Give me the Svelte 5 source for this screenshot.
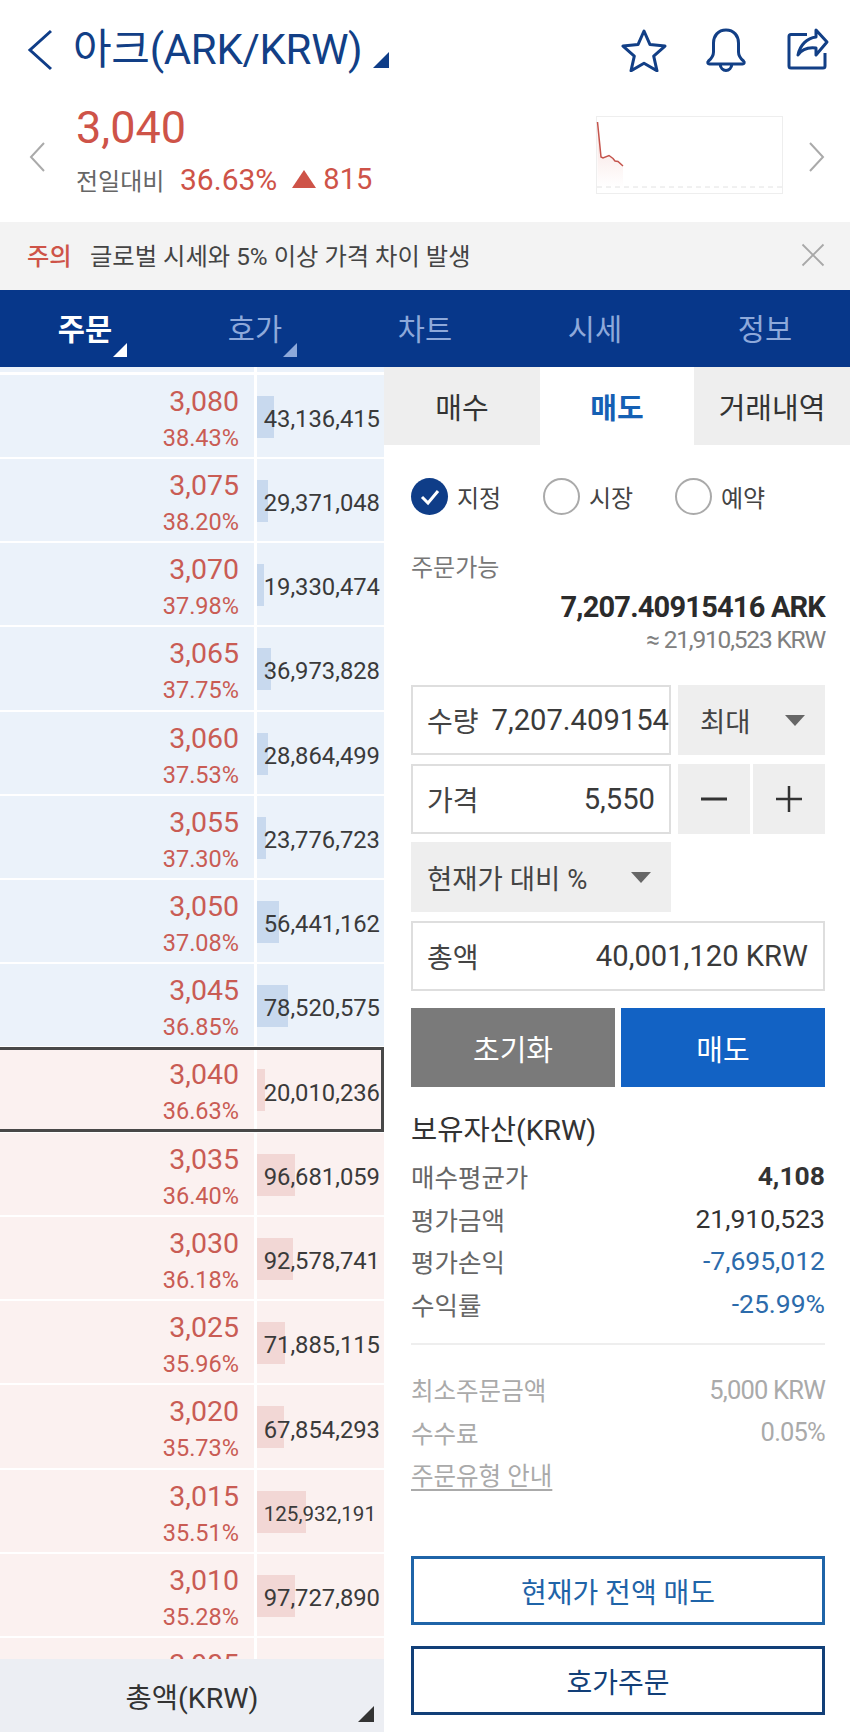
<script>
  const rows = [
    ['3,080','38.43%','43,136,415',43,'b'],['3,075','38.20%','29,371,048',29,'b'],['3,070','37.98%','19,330,474',19,'b'],
    ['3,065','37.75%','36,973,828',37,'b'],['3,060','37.53%','28,864,499',29,'b'],['3,055','37.30%','23,776,723',24,'b'],
    ['3,050','37.08%','56,441,162',56,'b'],['3,045','36.85%','78,520,575',79,'b'],['3,040','36.63%','20,010,236',20,'r'],
    ['3,035','36.40%','96,681,059',97,'r'],['3,030','36.18%','92,578,741',93,'r'],['3,025','35.96%','71,885,115',72,'r'],
    ['3,020','35.73%','67,854,293',68,'r'],['3,015','35.51%','125,932,191',126,'r'],['3,010','35.28%','97,727,890',98,'r'],
    ['3,005','','',0,'r']
  ];
  const tabs = ['주문','호가','차트','시세','정보'];
</script>

<div class="page">
  <header class="head">
    <div class="titlebar">
      <svg class="back" viewBox="0 0 26 42" width="26" height="42"><path d="M24 2 3 21l21 19" fill="none" stroke="#0f3d88" stroke-width="3"/></svg>
      <h1>아크(ARK/KRW)</h1>
      <span class="tri navy"></span>
      <div class="icons">
        <svg viewBox="0 0 46 44" width="46" height="44"><path d="M23 3l6 13.600 15 1.500-11.300 10 3.300 14.700L23 35.200 10 42.800l3.300-14.700L2 18.100l15-1.500z" fill="none" stroke="#123f86" stroke-width="3" stroke-linejoin="round"/></svg>
        <svg viewBox="0 0 42 44" width="42" height="44"><path d="M21 2c-8 0-12.500 6-12.500 13v9c0 4-2 6.500-5 9-1.500 1.500-.5 3 1 3h33c1.500 0 2.500-1.500 1-3-3-2.500-5-5-5-9v-9C33.500 8 29 2 21 2zM15 36c.5 4 3 6.500 6 6.500s5.500-2.500 6-6.500" fill="none" stroke="#123f86" stroke-width="3" stroke-linejoin="round"/></svg>
        <svg viewBox="0 0 44 44" width="44" height="44"><path d="M22 6.500H6a2 2 0 0 0-2 2V38a2 2 0 0 0 2 2h32a2 2 0 0 0 2-2V25" fill="none" stroke="#123f86" stroke-width="3"/><path d="M31 2l11 12-11 13v-7c-8-1-14 1-18 7 2-10 9-17 18-18z" fill="none" stroke="#123f86" stroke-width="3" stroke-linejoin="round"/></svg>
      </div>
    </div>
    <div class="quote">
      <svg class="chev" viewBox="0 0 16 30" width="16" height="30"><path d="M15 1 2 15l13 14" fill="none" stroke="#aaa" stroke-width="2"/></svg>
      <div class="qtext">
        <div class="now">3,040</div>
        <div class="delta"><span class="lbl">전일대비</span><span class="pct">36.63%</span><span class="up"></span><span class="amt">815</span></div>
      </div>
      <svg class="spark" viewBox="0 0 187 78" width="187" height="78">
        <defs><linearGradient id="g" x1="0" y1="0" x2="0" y2="1"><stop offset="0" stop-color="#e9a9a3" stop-opacity=".4"/><stop offset="1" stop-color="#e9a9a3" stop-opacity="0"/></linearGradient></defs>
        <rect x=".5" y=".5" width="186" height="77" fill="#fff" stroke="#eeeeee"/>
        <path d="M1.500 6 5 41l2 1 6-2.500 4 3 2 2.500 3 .5 5 4.500V71H1.500z" fill="url(#g)"/>
        <path d="M1.500 6 5 41l2 1 6-2.500 4 3 2 2.500 3 .5 5 4.500" fill="none" stroke="#c4544c" stroke-width="1.500"/>
        <path d="M1 71h185" stroke="#e2e2e2" stroke-dasharray="5 4"/>
      </svg>
      <svg class="chev" viewBox="0 0 16 30" width="16" height="30"><path d="M1 1l13 14L1 29" fill="none" stroke="#aaa" stroke-width="2"/></svg>
    </div>
  </header>

  <div class="notice">
    <b>주의</b><span>글로벌 시세와 5% 이상 가격 차이 발생</span>
    <svg viewBox="0 0 24 24" width="24" height="24"><path d="M1.500 1.500l21 21M22.500 1.500l-21 21" stroke="#a8a8a8" stroke-width="1.800"/></svg>
  </div>

  <nav class="nav">
    {#each tabs as t, i}
      <div class="nt" class:on={i === 0}>{t}{#if i < 2}<span class="tri small"></span>{/if}</div>
    {/each}
  </nav>

  <main class="main">
    <section class="book">
      <div class="list">
        <div class="stub"><i></i><i></i></div>
        {#each rows as r, i}
          <div class="row {r[4]}" class:cur={r[0] === '3,040'}>
            <div class="pc"><div class="p">{r[0]}</div><div class="q">{r[1]}</div></div>
            <div class="vc">
              <span class="bar" style="width:{r[3] * 0.39}px"></span>
              <span class="v" class:sm={r[2].length > 10}>{r[2]}</span>
            </div>
          </div>
        {/each}
      </div>
      <div class="foot">총액(KRW)<span class="tri dark"></span></div>
    </section>

    <section class="panel">
      <div class="ptabs"><div>매수</div><div class="act">매도</div><div>거래내역</div></div>
      <div class="body">
        <div class="radios">
          <label><span class="rd on"><svg viewBox="0 0 37 37" width="37" height="37"><path d="M11 19l6 6 10-12" fill="none" stroke="#fff" stroke-width="3"/></svg></span>지정</label>
          <label><span class="rd"></span>시장</label>
          <label><span class="rd"></span>예약</label>
        </div>
        <div class="avail">주문가능</div>
        <div class="amount">7,207.40915416 ARK</div>
        <div class="approx">≈ 21,910,523 KRW</div>

        <div class="grid">
          <div class="inp qty"><span class="k">수량</span><span class="val">7,207.409154</span></div>
          <div class="sel side">최대<span class="caret"></span></div>
          <div class="inp"><span class="k">가격</span><span class="val">5,550</span></div>
          <div class="steps">
            <div><svg viewBox="0 0 28 28" width="28" height="28"><path d="M1 14h26" stroke="#333" stroke-width="3"/></svg></div>
            <div><svg viewBox="0 0 28 28" width="28" height="28"><path d="M1 14h26M14 1v26" stroke="#333" stroke-width="2.500"/></svg></div>
          </div>
          <div class="sel">현재가 대비 %<span class="caret"></span></div>
          <div></div>
          <div class="inp wide"><span class="k">총액</span><span class="val">40,001,120 KRW</span></div>
        </div>

        <div class="btns"><button class="reset">초기화</button><button class="sell">매도</button></div>

        <h2>보유자산(KRW)</h2>
        <dl class="hold">
          <div><dt>매수평균가</dt><dd class="bold">4,108</dd></div>
          <div><dt>평가금액</dt><dd>21,910,523</dd></div>
          <div><dt>평가손익</dt><dd class="blue">-7,695,012</dd></div>
          <div><dt>수익률</dt><dd class="blue">-25.99%</dd></div>
        </dl>
        <hr />
        <dl class="info">
          <div><dt>최소주문금액</dt><dd>5,000 KRW</dd></div>
          <div><dt>수수료</dt><dd>0.05%</dd></div>
          <div><dt class="ul">주문유형 안내</dt></div>
        </dl>
        <button class="outline blue2">현재가 전액 매도</button>
        <button class="outline navy2">호가주문</button>
      </div>
    </section>
  </main>
</div>

<style>
  :global(body) { margin: 0; background: #fff; }
  .page { width: 850px; height: 1732px; overflow: hidden; background: #fff; color: #333; font-family: Roboto, "Noto Sans CJK KR", sans-serif; display: flex; flex-direction: column; }
  .head { height: 222px; box-sizing: border-box; padding: 28px 21px 0 27px; }
  .titlebar { display: flex; align-items: center; height: 44px; }
  .back { margin-right: 20px; flex: none; }
  h1 { margin: 0; font-size: 42px; font-weight: 400; color: #123f86; line-height: 44px; letter-spacing: -.3px; white-space: nowrap; }
  .tri { display: block; width: 0; height: 0; border-style: solid; border-width: 0 0 16px 16px; border-color: transparent; }
  .tri.navy { border-bottom-color: #0f3d88; margin: 20px 0 0 11px; }
  .icons { margin-left: auto; display: flex; gap: 38px; align-items: center; }
  .quote { display: flex; align-items: center; margin-top: 32px; height: 100px; position: relative; }
  .quote .chev { flex: none; margin: 6px 0 0 2px; }
  .qtext { margin: 0 0 8px 31px; width: 520px; flex: none; }
  .now { font-size: 45px; line-height: 50px; color: #ce5348; }
  .delta { display: flex; align-items: center; margin-top: 8px; height: 36px; }
  .lbl { font-size: 24px; color: #666; width: 104px; }
  .pct { font-size: 30px; color: #ce5348; }
  .up { width: 0; height: 0; border-style: solid; border-width: 0 12px 18px; border-color: transparent transparent #ce5348; margin: 0 7px 0 15px; }
  .amt { font-size: 29px; color: #ce5348; }
  .spark { flex: none; margin: 1px 0 0 0; }
  .quote .chev:last-child { margin-left: 26px; }

  .notice { height: 68px; background: #f3f3f3; display: flex; align-items: center; padding: 0 25px 3px 27px; box-sizing: border-box; font-size: 24.300px; }
  .notice b { color: #ce5348; font-weight: 500; width: 63px; }
  .notice span { color: #444; flex: 1; }

  .nav { height: 77px; background: #07378a; display: grid; grid-template-columns: repeat(5, 1fr); }
  .nt { display: flex; align-items: center; justify-content: center; font-size: 29.500px; color: #8ea9da; position: relative; padding-bottom: 4px; box-sizing: border-box; }
  .nt.on { color: #fff; font-weight: 700; }
  .tri.small { position: absolute; left: 113px; bottom: 10px; border-width: 0 0 14px 14px; border-bottom-color: #8ea9da; }
  .nt.on .tri.small { border-bottom-color: #fff; }

  .main { flex: 1; display: flex; min-height: 0; }
  .book { width: 384px; flex: none; display: flex; flex-direction: column; min-height: 0; }
  .list { flex: 1; overflow: hidden; min-height: 0; }
  .stub { height: 5px; margin-bottom: 2.600px; display: grid; grid-template-columns: 254px 127px; column-gap: 3px; }
  .stub i { background: #ebf2fa; }
  .row { height: 82.240px; margin-bottom: 2px; display: grid; grid-template-columns: 254px 127px; column-gap: 3px; position: relative; }
  .pc { text-align: right; padding-right: 15px; box-sizing: border-box; }
  .p { font-size: 28.500px; line-height: 36px; margin-top: 9px; color: #c95c54; }
  .q { font-size: 23.500px; line-height: 30px; margin-top: 3px; color: #c95c54; }
  .vc { position: relative; display: flex; align-items: center; justify-content: flex-end; padding-right: 4px; }
  .bar { position: absolute; left: 0; top: 21px; height: 42px; }
  .v { position: relative; font-size: 23.800px; color: #3a3a3a; margin-top: 6px; }
  .v.sm { font-size: 20.600px; margin-right: 4px; }
  .row.b .pc, .row.b .vc { background: #ebf2fa; }
  .row.b .bar { background: #c8d9ee; }
  .row.r .pc, .row.r .vc { background: #fbf1f0; }
  .row.r .bar { background: #f2d7d5; }
  .row.cur::after { content: ""; position: absolute; left: -4px; right: 0; top: -1.500px; bottom: -1.500px; border: 3px solid #484848; pointer-events: none; }
  .row.cur { width: 384px; }
  .foot { height: 73px; flex: none; background: #eceef3; position: relative; display: flex; align-items: center; justify-content: center; font-size: 28.500px; color: #333; }
  .tri.dark { position: absolute; right: 10px; bottom: 10px; border-bottom-color: #333; }

  .panel { flex: 1; min-width: 0; }
  .ptabs { display: grid; grid-template-columns: 156px 154px 156px; height: 78px; }
  .ptabs div { background: #eeeeee; display: flex; align-items: center; justify-content: center; font-size: 29px; color: #333; padding-bottom: 1px; box-sizing: border-box; }
  .ptabs .act { background: #fff; color: #1560b4; font-weight: 700; }
  .body { padding: 0 25px 0 27px; }
  .radios { display: flex; margin-top: 33px; height: 37px; }
  .radios label { display: flex; align-items: center; width: 132px; font-size: 24px; color: #444; gap: 9px; }
  .rd { width: 37px; height: 37px; box-sizing: border-box; border: 2px solid #aaa; border-radius: 50%; display: block; }
  .rd svg { display: block; }
  .rd.on { border: 0; background: #0f3d88; }
  .avail { margin-top: 36px; font-size: 24px; color: #777; line-height: 34px; }
  .amount { text-align: right; font-size: 29px; font-weight: 700; color: #2b2b2b; letter-spacing: -.8px; line-height: 36px; margin-top: 4px; }
  .approx { text-align: right; font-size: 24.500px; color: #808080; letter-spacing: -1.200px; line-height: 30px; }
  .grid { display: grid; grid-template-columns: 260px 147px; column-gap: 7px; row-gap: 8.700px; grid-auto-rows: 70px; margin-top: 30px; }
  .inp { border: 2px solid #dedede; box-sizing: border-box; display: flex; align-items: center; justify-content: space-between; padding: 0 14px; font-size: 28px; }
  .inp.qty { padding-right: 0; }
  .inp.wide { grid-column: 1 / 3; padding-right: 15px; }
  .k { color: #444; }
  .val { font-size: 29.200px; color: #3a3a3a; }
  .sel { background: #eeeeee; display: flex; align-items: center; justify-content: space-between; padding: 0 20px 0 16px; font-size: 27.500px; color: #444; }
  .side { padding-left: 22px; }
  .caret { width: 0; height: 0; border-style: solid; border-width: 11px 10px 0; border-color: #666 transparent transparent; }
  .steps { display: flex; justify-content: space-between; }
  .steps div { width: 72px; background: #eeeeee; display: flex; align-items: center; justify-content: center; }
  .steps svg { display: block; }
  .btns { display: flex; gap: 6px; margin-top: 17px; }
  button { font-family: inherit; border: 0; padding: 0; display: block; }
  .btns button { flex: 1; height: 79px; color: #fff; font-size: 29px; }
  .reset { background: #7a7a7a; }
  .sell { background: #1262c4; }
  h2 { margin: 25.500px 0 0; font-weight: 400; font-size: 28.500px; line-height: 36px; color: #333; }
  dl { margin: 0; }
  dl div { display: flex; justify-content: space-between; align-items: center; height: 42.500px; }
  dt { margin: 0; }
  dd { margin: 0; }
  .hold { margin-top: 6px; }
  .hold dt { font-size: 25.500px; color: #666; }
  .hold dd { font-size: 26.500px; color: #333; }
  .hold .bold { font-weight: 700; }
  .hold .blue { color: #2c6bab; }
  hr { border: 0; height: 2px; background: #eeeeee; margin: 18px 0 0; }
  .info { margin-top: 24px; }
  .info dt { font-size: 24.500px; color: #aaa; }
  .info dd { font-size: 25.500px; color: #aaa; letter-spacing: -.8px; }
  .ul { text-decoration: underline; text-underline-offset: 4px; }
  .outline { width: 100%; height: 69px; background: #fff; box-sizing: border-box; font-size: 28px; }
  .blue2 { border: 3px solid #1f64a8; color: #1f64a8; margin-top: 60px; }
  .navy2 { border: 3px solid #123f78; color: #123f78; margin-top: 21px; }
</style>
